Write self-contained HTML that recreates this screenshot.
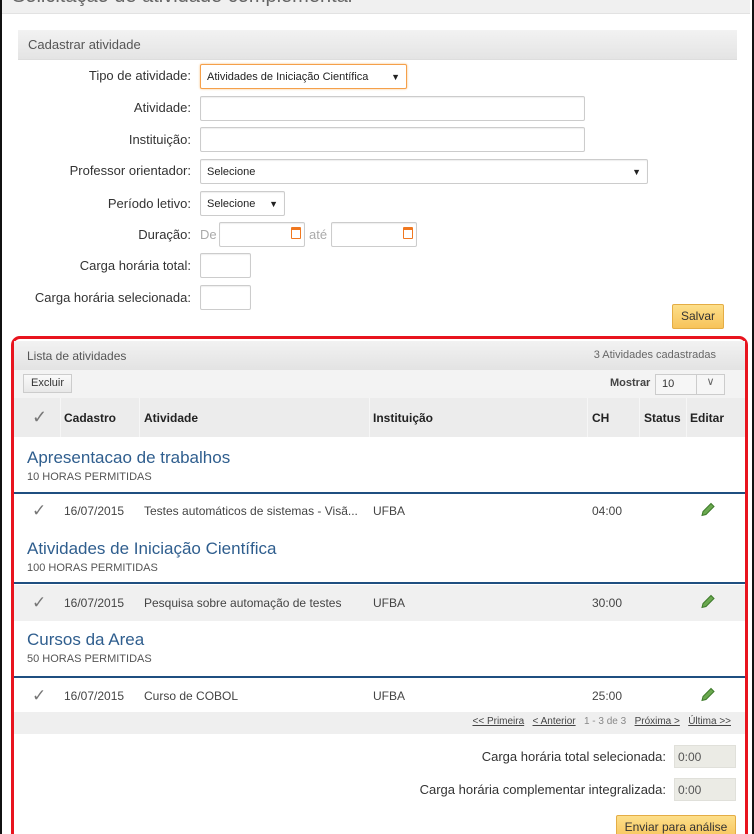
<!DOCTYPE html>
<html><head><meta charset="utf-8"><style>
*{box-sizing:border-box;margin:0;padding:0}
html{width:754px;height:834px;overflow:hidden}
body{width:754px;height:834px;overflow:hidden;background:#fff;font-family:"Liberation Sans",sans-serif;font-size:12px;color:#333;position:relative}
.a{position:absolute}
.lbl{position:absolute;right:563px;font-size:13px;color:#333;white-space:nowrap}
.inp{position:absolute;border:1px solid #ccc;background:#fff;border-radius:2px;box-shadow:inset 0 1px 1px #eee}
.sel{font-size:11px;color:#222;padding:0 6px;display:flex;align-items:center;justify-content:space-between}
.g{position:absolute;left:27px;font-size:17px;color:#2f5e8e}
.s{position:absolute;left:27px;font-size:11px;color:#555}
.ln{position:absolute;left:14px;width:731px;height:2px;background:#1f4f80}
.row{position:absolute;left:14px;width:731px;font-size:12px;color:#444}
.row span{position:absolute;top:50%;transform:translateY(-50%);white-space:nowrap}
.chk{left:18px;font-size:17px;color:#777}
.pen{left:686px}
.btn{position:absolute;background:linear-gradient(#fddf8a,#f7c35a);border:1px solid #e4ad45;border-radius:2px;font-size:12px;color:#333;text-align:center}
</style></head><body>
<div class="a" style="left:0;top:0;width:754px;height:834px;border-left:2px solid #111;border-right:2px solid #111"></div>
<div class="a" style="left:2px;top:0;width:748px;height:14px;background:#f0f0f0;border-bottom:1px solid #e2e2e2;overflow:hidden"><div style="position:absolute;left:10px;top:-15px;font-size:20px;color:#666;white-space:nowrap">Solicitação de atividade complementar</div></div>
<div class="a" style="left:18px;top:30px;width:719px;height:30px;background:linear-gradient(#f2f2f2,#e4e4e4);border-bottom:1px solid #ddd"><div style="position:absolute;left:10px;top:7px;font-size:13px;color:#555">Cadastrar atividade</div></div>

<div class="lbl" style="top:68px">Tipo de atividade:</div>
<div class="inp sel" style="left:200px;top:64px;width:207px;height:25px;border:1px solid #f5a04a;box-shadow:0 0 2px #f8c080"><span>Atividades de Iniciação Científica</span><span style="font-size:9px">▼</span></div>
<div class="lbl" style="top:100px">Atividade:</div>
<div class="inp" style="left:200px;top:96px;width:385px;height:25px"></div>
<div class="lbl" style="top:132px">Instituição:</div>
<div class="inp" style="left:200px;top:127px;width:385px;height:25px"></div>
<div class="lbl" style="top:163px">Professor orientador:</div>
<div class="inp sel" style="left:200px;top:159px;width:448px;height:25px"><span>Selecione</span><span style="font-size:9px">▼</span></div>
<div class="lbl" style="top:196px">Período letivo:</div>
<div class="inp sel" style="left:200px;top:191px;width:85px;height:25px"><span>Selecione</span><span style="font-size:9px">▼</span></div>
<div class="lbl" style="top:227px">Duração:</div>
<div class="a" style="left:200px;top:227px;font-size:13px;color:#aaa">De</div>
<div class="inp" style="left:219px;top:222px;width:86px;height:25px"><div style="position:absolute;right:3px;top:4px;width:10px;height:12px;border:1.5px solid #f07820;border-top-width:3px;border-radius:1px"></div></div>
<div class="a" style="left:309px;top:227px;font-size:13px;color:#aaa">até</div>
<div class="inp" style="left:331px;top:222px;width:86px;height:25px"><div style="position:absolute;right:3px;top:4px;width:10px;height:12px;border:1.5px solid #f07820;border-top-width:3px;border-radius:1px"></div></div>
<div class="lbl" style="top:258px">Carga horária total:</div>
<div class="inp" style="left:200px;top:253px;width:51px;height:25px"></div>
<div class="lbl" style="top:290px">Carga horária selecionada:</div>
<div class="inp" style="left:200px;top:285px;width:51px;height:25px"></div>
<div class="btn" style="left:672px;top:304px;width:52px;height:25px;line-height:23px">Salvar</div>

<div class="a" style="left:11px;top:336px;width:737px;height:520px;border:3px solid #e8141e;border-radius:9px"></div>
<div class="a" style="left:14px;top:341px;width:731px;height:29px;background:linear-gradient(#f2f2f2,#e3e3e3)"><div style="position:absolute;left:13px;top:8px;font-size:12px;color:#555">Lista de atividades</div><div style="position:absolute;right:29px;top:8px;font-size:11px;color:#666">3 Atividades cadastradas</div></div>
<div class="a" style="left:14px;top:370px;width:731px;height:28px;background:#f3f3f3"></div>
<div class="a" style="left:23px;top:374px;width:49px;height:19px;border:1px solid #ccc;background:linear-gradient(#fafafa,#e8e8e8);font-size:11px;text-align:center;line-height:17px;color:#333">Excluir</div>
<div class="a" style="left:610px;top:377px;font-size:11px;font-weight:bold;color:#444">Mostrar</div>
<div class="a" style="left:655px;top:374px;width:70px;height:21px;border:1px solid #ccc;background:#f6f6f6;font-size:11px;padding:3px 0 0 6px">10<span style="position:absolute;left:40px;top:0;width:28px;height:19px;border-left:1px solid #ccc;text-align:center;color:#666">∨</span></div>
<div class="a" style="left:14px;top:398px;width:731px;height:39px;background:#ececec;font-weight:bold;font-size:12px;color:#222">
<span class="a" style="left:0;top:0;width:47px;height:39px;border-right:1px solid #f6f6f6"></span>
<span class="a" style="left:47px;top:0;width:79px;height:39px;border-right:1px solid #f6f6f6"></span>
<span class="a" style="left:126px;top:0;width:230px;height:39px;border-right:1px solid #f6f6f6"></span>
<span class="a" style="left:356px;top:0;width:218px;height:39px;border-right:1px solid #f6f6f6"></span>
<span class="a" style="left:574px;top:0;width:52px;height:39px;border-right:1px solid #f6f6f6"></span>
<span class="a" style="left:626px;top:0;width:47px;height:39px;border-right:1px solid #f6f6f6"></span>
<span class="a" style="left:18px;top:9px;font-size:18px;color:#777;font-weight:normal">✓</span>
<span class="a" style="left:50px;top:13px">Cadastro</span><span class="a" style="left:130px;top:13px">Atividade</span><span class="a" style="left:359px;top:13px">Instituição</span><span class="a" style="left:578px;top:13px">CH</span><span class="a" style="left:630px;top:13px">Status</span><span class="a" style="left:676px;top:13px">Editar</span></div>

<div class="g" style="top:448px">Apresentacao de trabalhos</div><div class="s" style="top:471px">10 HORAS PERMITIDAS</div><div class="ln" style="top:492px"></div>
<div class="row" style="top:495px;height:32px"><span class="chk">✓</span><span style="left:50px">16/07/2015</span><span style="left:130px">Testes automáticos de sistemas - Visã...</span><span style="left:359px">UFBA</span><span style="left:578px">04:00</span><span class="pen"><svg width="16" height="16" viewBox="0 0 16 16"><path d="M2 14l1-4 8-8 3 3-8 8z" fill="#6aa84f" stroke="#3d7a2a" stroke-width="1"/></svg></span></div>
<div class="g" style="top:539px">Atividades de Iniciação Científica</div><div class="s" style="top:562px">100 HORAS PERMITIDAS</div><div class="ln" style="top:582px"></div>
<div class="row" style="top:585px;height:36px;background:#f0f0f0"><span class="chk">✓</span><span style="left:50px">16/07/2015</span><span style="left:130px">Pesquisa sobre automação de testes</span><span style="left:359px">UFBA</span><span style="left:578px">30:00</span><span class="pen"><svg width="16" height="16" viewBox="0 0 16 16"><path d="M2 14l1-4 8-8 3 3-8 8z" fill="#6aa84f" stroke="#3d7a2a" stroke-width="1"/></svg></span></div>
<div class="g" style="top:630px">Cursos da Area</div><div class="s" style="top:653px">50 HORAS PERMITIDAS</div><div class="ln" style="top:676px"></div>
<div class="row" style="top:679px;height:33px"><span class="chk">✓</span><span style="left:50px">16/07/2015</span><span style="left:130px">Curso de COBOL</span><span style="left:359px">UFBA</span><span style="left:578px">25:00</span><span class="pen"><svg width="16" height="16" viewBox="0 0 16 16"><path d="M2 14l1-4 8-8 3 3-8 8z" fill="#6aa84f" stroke="#3d7a2a" stroke-width="1"/></svg></span></div>
<div class="a" style="left:14px;top:712px;width:731px;height:22px;background:#efefef;font-size:10px;color:#444"><div style="position:absolute;right:14px;top:4px;white-space:nowrap"><u>&lt;&lt; Primeira</u>&nbsp;&nbsp; <u>&lt; Anterior</u>&nbsp;&nbsp; <span style="color:#888">1 - 3 de 3</span>&nbsp;&nbsp; <u>Próxima &gt;</u>&nbsp;&nbsp; <u>Última &gt;&gt;</u></div></div>
<div class="a" style="right:88px;top:749px;font-size:13px;color:#333">Carga horária total selecionada:</div>
<div class="a" style="left:674px;top:745px;width:62px;height:23px;background:#ebebe5;border:1px solid #e0e0da;font-size:12px;color:#555;padding:4px 0 0 3px">0:00</div>
<div class="a" style="right:88px;top:782px;font-size:13px;color:#333">Carga horária complementar integralizada:</div>
<div class="a" style="left:674px;top:778px;width:62px;height:23px;background:#ebebe5;border:1px solid #e0e0da;font-size:12px;color:#555;padding:4px 0 0 3px">0:00</div>
<div class="btn" style="left:616px;top:815px;width:120px;height:25px;line-height:23px">Enviar para análise</div>
</body></html>
